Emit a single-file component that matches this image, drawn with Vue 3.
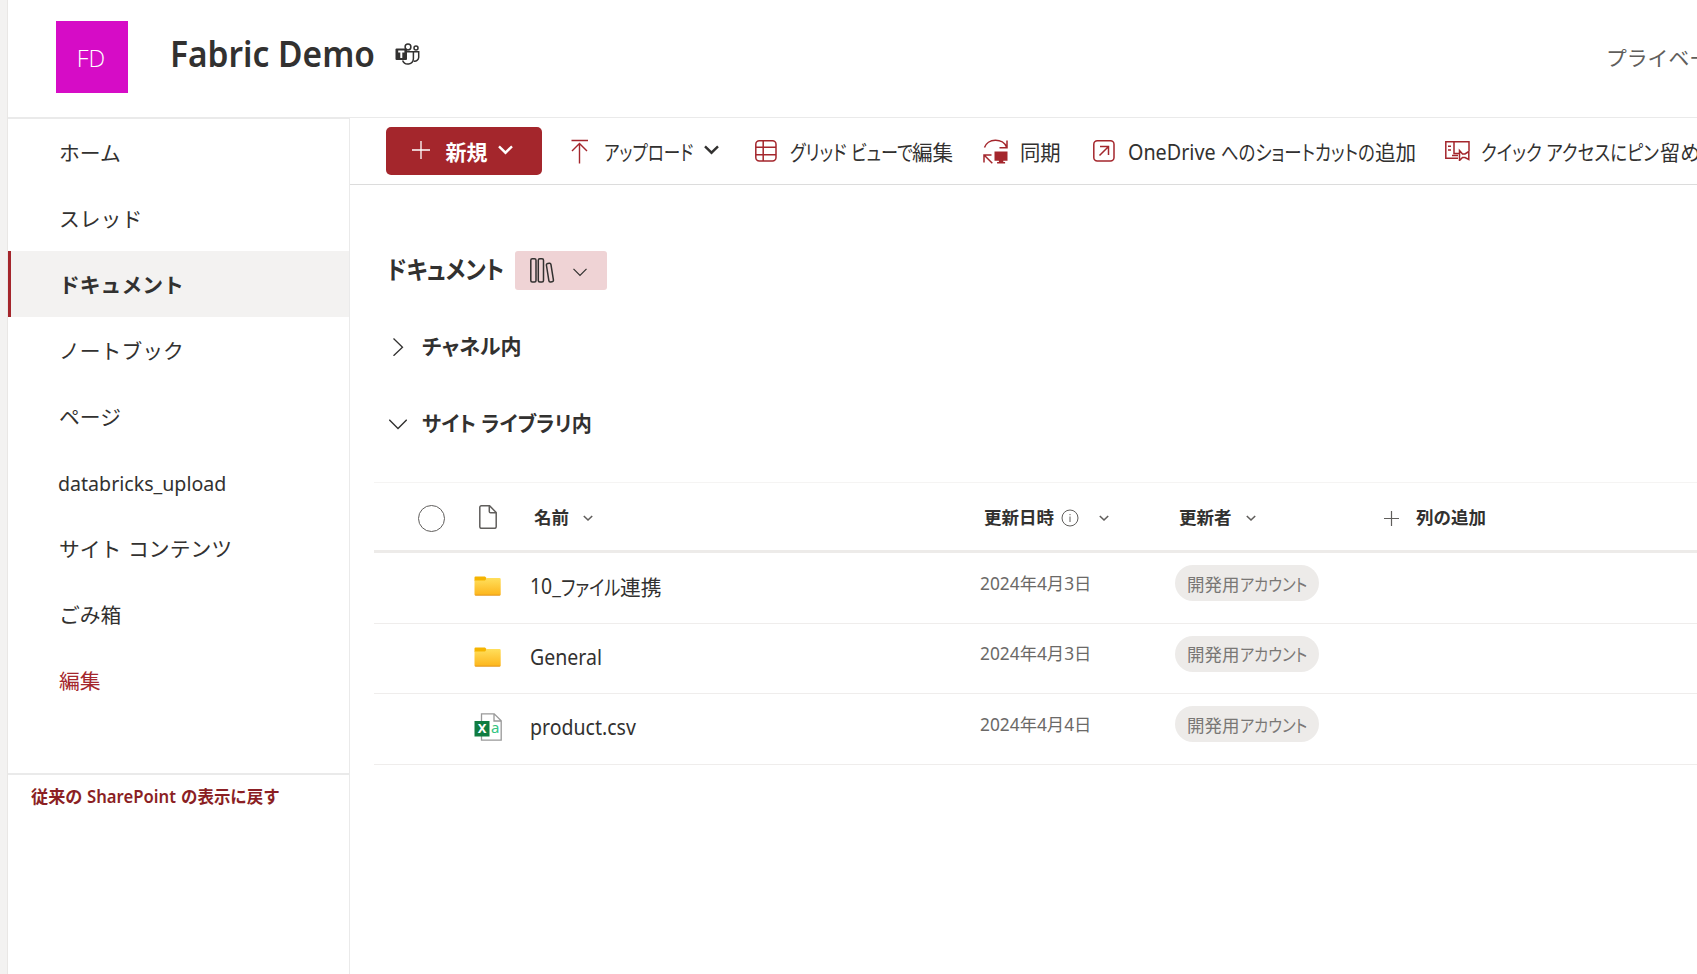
<script setup>
const nav = [
  { label: 'ホーム' },
  { label: 'スレッド' },
  { label: 'ドキュメント', active: true },
  { label: 'ノートブック' },
  { label: 'ページ' },
  { label: 'databricks_upload', latin: true },
  { label: 'サイト コンテンツ' },
  { label: 'ごみ箱' },
  { label: '編集', edit: true },
]
const rows = [
  { kind: 'folder', name: [{ t: '10_', c: 'n-num' }, { t: 'ファイル', c: 'n-kana' }, { t: '連携', c: 'n-kanji' }], date: '2024年4月3日' },
  { kind: 'folder', name: [{ t: 'General', c: 'n-latin' }], date: '2024年4月3日' },
  { kind: 'csv', name: [{ t: 'product.csv', c: 'n-latin' }], date: '2024年4月4日' },
]
</script>

<template>
  <div class="page">
    <div class="strip"></div>
    <div class="site">
      <header class="head">
        <div class="logo">FD</div>
        <h1 class="title t">Fabric Demo</h1>
        <svg class="teams" width="25" height="23" viewBox="0 0 25 23" fill="none" stroke="#323130" stroke-width="1.500">
          <circle cx="13" cy="4" r="2.900" />
          <circle cx="21" cy="5" r="2" />
          <path d="M18.500 8.700h5.200v5.800a4 4 0 0 1-5 3.600" />
          <path d="M12 8.700h6.400v7a5.600 5.600 0 0 1-10.800 1.800" />
          <rect x="0.500" y="5.500" width="11.500" height="11.500" rx="1" fill="#323130" stroke="none" />
          <path d="M3.200 8.400h6.200M6.300 8.400v6.500" stroke="#fff" stroke-width="2" />
        </svg>
        <span class="privacy">プライベート</span>
      </header>
      <div class="body">
        <aside class="side">
          <nav>
            <a v-for="n in nav" :key="n.label" class="item" :class="{ active: n.active, edit: n.edit, latin: n.latin }"><span class="t">{{ n.label }}</span></a>
          </nav>
          <a class="classic"><span class="t c1">従来の</span><span class="t c2">SharePoint</span><span class="t c3">の表示に戻す</span></a>
        </aside>
        <main class="main">
          <div class="bar">
            <button class="new">
              <svg width="18" height="18" viewBox="0 0 18 18" stroke="#fff" stroke-width="1.300"><path d="M9 0v18M0 9h18" /></svg>
              <span class="t">新規</span>
              <svg class="chev" width="15" height="10" viewBox="0 0 15 10" fill="none" stroke="#fff" stroke-width="2.400"><path d="M1 1.300l6.500 6.400L14 1.300" /></svg>
            </button>
            <svg class="i-up" width="18" height="25" viewBox="0 0 18 25" fill="none" stroke="#a4262c" stroke-width="1.400"><path d="M0.500 1.500h16.500M8.500 24.500V4.500M1 12l7.500-7.600 7.500 7.600" /></svg>
            <span class="t cmd b1">アップロード</span>
            <svg class="i-ch" width="15" height="10" viewBox="0 0 15 10" fill="none" stroke="#323130" stroke-width="2.400"><path d="M1 1.300l6.500 6.400L14 1.300" /></svg>
            <svg class="i-grid" width="22" height="22" viewBox="0 0 22 22" fill="none" stroke="#a4262c" stroke-width="1.500"><rect x="0.800" y="0.800" width="20.200" height="20.200" rx="3.500" /><path d="M8.200 1v20M1 7.200h20M1 14.800h20" /></svg>
            <span class="t cmd b2">グリッド ビューで</span><span class="t cmd b2k">編集</span>
            <svg class="i-sync" width="25" height="25" viewBox="0 0 25 25" fill="none" stroke="#a4262c" stroke-width="1.500"><path d="M1.500 8.500A11.500 10 0 0 1 23.500 8M24 1.500v7.300h-7.500M1 23.500v-7.500h7.500M1.300 16.300l8 8" /><path d="M11.500 12.500h13v9.300h-4.200v1.200h1.800v1.500h-8v-1.500h1.800v-1.200h-4.400z" fill="#a4262c" stroke="none" /></svg>
            <span class="t cmd b3">同期</span>
            <svg class="i-short" width="22" height="22" viewBox="0 0 22 22" fill="none" stroke="#a4262c" stroke-width="1.500"><rect x="0.800" y="0.800" width="20.200" height="20.200" rx="3.500" /><path d="M6.500 15.500L15.300 6.700M7 6.500h8.500v8.500" /></svg>
            <span class="t cmd b4">OneDrive</span>
            <span class="t cmd b5">へのショートカットの</span><span class="t cmd b5k">追加</span>
            <svg class="i-pin" width="25" height="20" viewBox="0 0 25 20" fill="none" stroke="#a4262c" stroke-width="1.500"><path d="M13 17.300H0.800V0.800H24v9M9 1v11.500h5M3 5.300h3M3 9h3M7 14.500h6" /><path d="M14.500 9.500l3 3.500h2.500l3.800-2.500v8l-3.800-2h-2.500l-3 3z" /></svg>
            <span class="t cmd b6">クイック アクセスにピン</span><span class="t cmd b6k">留め</span>
          </div>
          <div class="crumb">
            <h2 class="t">ドキュメント</h2>
            <div class="chip">
              <svg width="25" height="25" viewBox="0 0 25 25" fill="none" stroke="#323130" stroke-width="1.500"><rect x="0.800" y="0.800" width="5.200" height="23.200" rx="1.500" /><rect x="8.300" y="0.800" width="5.200" height="23.200" rx="1.500" /><rect x="17.600" y="5.300" width="4.600" height="18.600" rx="1.500" transform="rotate(-9 19.900 14.500)" /></svg>
              <svg class="chip-ch" width="14" height="9" viewBox="0 0 14 9" fill="none" stroke="#323130" stroke-width="1.200"><path d="M0.500 0.800L7 7.500l6.500-6.700" /></svg>
            </div>
          </div>
          <div class="group">
            <svg width="18" height="18" viewBox="0 0 18 18" fill="none" stroke="#323130" stroke-width="1.300"><path d="M4.500 0.500L13.500 9.200l-9 8.600" /></svg>
            <span class="t">チャネル内</span>
          </div>
          <div class="group g2">
            <svg width="18" height="18" viewBox="0 0 18 18" fill="none" stroke="#323130" stroke-width="1.300"><path d="M0.300 4.800L9 13.500l8.700-8.700" /></svg>
            <span class="t">サイト ライブラリ内</span>
          </div>
          <div class="table">
            <div class="row th">
              <div class="c-sel"><i></i></div>
              <div class="c-ico"><svg width="18" height="24" viewBox="0 0 18 24" fill="none" stroke="#605e5c" stroke-width="1.500"><path d="M2.300 0.800h8.300l6.600 6.700v14.300a1.500 1.500 0 0 1-1.500 1.500H2.300A1.500 1.500 0 0 1 0.800 21.800V2.300A1.500 1.500 0 0 1 2.300 0.800zM10.300 1v5.500a1.300 1.300 0 0 0 1.300 1.300H17" /></svg></div>
              <div class="c-name"><span class="t">名前</span><svg class="sc" width="10" height="7" viewBox="0 0 10 7"><path d="M0.800 1l4.200 4 4.200-4" /></svg></div>
              <div class="c-date"><span class="t">更新日時</span>
                <svg class="info" width="18" height="18" viewBox="0 0 18 18" fill="none" stroke="#605e5c"><circle cx="9" cy="9" r="8" /><path d="M9 7.500v5.500M9 5v1.200" /></svg>
                <svg class="sc" width="10" height="7" viewBox="0 0 10 7"><path d="M0.800 1l4.200 4 4.200-4" /></svg></div>
              <div class="c-by"><span class="t">更新者</span><svg class="sc" width="10" height="7" viewBox="0 0 10 7"><path d="M0.800 1l4.200 4 4.200-4" /></svg></div>
              <div class="c-add"><svg width="15" height="15" viewBox="0 0 15 15" stroke="#605e5c" stroke-width="1.200"><path d="M7.500 0v15M0 7.500h15" /></svg><span class="t">列の追加</span></div>
            </div>
            <div v-for="(r, i) in rows" :key="i" class="row td">
              <div class="c-sel"></div>
              <div class="c-ico">
                <svg v-if="r.kind === 'folder'" width="27" height="20" viewBox="0 0 27 20"><defs><linearGradient id="fg" x1="0" y1="0" x2="0" y2="1"><stop offset="0" stop-color="#ffdf5c" /><stop offset="1" stop-color="#fdb51b" /></linearGradient></defs><path d="M0.500 1.500a1 1 0 0 1 1-1h9.500l1.500 1.500v3h-12z" fill="#f5b400" /><path d="M0.500 4.500h10.500l2-2.500h12.500a1.200 1.200 0 0 1 1.200 1.200v15a1.200 1.200 0 0 1-1.200 1.200H1.700a1.200 1.200 0 0 1-1.200-1.200z" fill="url(#fg)" /><path d="M0.700 18.700q.3 .8 1 .8h23.800q.8 0 1-.8z" fill="#d98a1c" /></svg>
                <svg v-else width="28" height="28" viewBox="0 0 28 28"><path d="M7.500 0.800h12.700l7 7v19.400H7.500zM20 1v7h7" fill="#fff" stroke="#999" stroke-width="1.300" /><rect x="0.500" y="8" width="15" height="15.500" fill="#107c41" /><text class="xl" x="8" y="20.300" fill="#fff">X</text><text class="xa" x="21.200" y="20.300" fill="#33c481">a</text></svg>
              </div>
              <div class="c-name"><span v-for="p in r.name" :key="p.t" class="t nm" :class="p.c">{{ p.t }}</span></div>
              <div class="c-date"><span class="t dt">{{ r.date }}</span></div>
              <div class="c-by"><span class="pill"><span class="t">開発用</span><span class="t pk">アカウント</span></span></div>
            </div>
          </div>
        </main>
      </div>
    </div>
  </div>
</template>

<style>
body { background: #fff; overflow: hidden; }
</style>

<style scoped>
* { box-sizing: border-box; }
.page { display: flex; width: 1697px; height: 974px; overflow: hidden; background: #fff; color: #323130; font-family: "Noto Sans", "Noto Sans CJK JP", sans-serif; white-space: nowrap; }
svg { display: block; flex: none; }
.t { flex: none; transform-origin: 0 50%; }
.strip { width: 8px; flex: none; background: #f3f2f1; border-right: 1px solid #e9e7e5; }
.site { flex: 1; min-width: 0; display: flex; flex-direction: column; }
.head { height: 118px; flex: none; display: flex; align-items: flex-start; border-bottom: 1px solid #eaeaea; overflow: hidden; }
.logo { flex: none; width: 72px; height: 72px; margin: 21px 0 0 48px; background: #d60cc6; color: #fff; font: 300 23.500px/75px "Open Sans", sans-serif; text-align: center; padding-right: 2px; }
.title { margin: 29px 0 0 42px; width: 225px; font-size: 36px; line-height: 50px; font-weight: 600; transform: scaleX(.93); }
.teams { margin-top: 43px; }
.privacy { flex: none; margin: 42px 0 0 1186px; font-size: 20.800px; line-height: 32px; color: #605e5c; }
.body { flex: 1; display: flex; min-height: 0; }
.side { width: 342px; flex: none; border-right: 1px solid #eaeaea; border-top: 1px solid #eaeaea; }
nav { height: 656px; border-bottom: 2px solid #eaeaea; }
.item { display: flex; align-items: center; height: 66px; padding-left: 51px; font-size: 20.800px; font-family: "Noto Sans CJK JP", sans-serif; word-spacing: 2px; }
.item.active { background: #f3f2f1; border-left: 3px solid #a4262c; padding-left: 48px; font-weight: 700; }
.item.edit { color: #a4262c; }
.item.latin { font-family: "Noto Sans", sans-serif; padding: 2px 0 0 50px; }
.item.latin .t { transform: scaleX(.942); }
.classic { display: flex; padding: 8px 0 0 23px; font-size: 17.500px; line-height: 26px; font-weight: 600; color: #8b1f24; }
.c1 { width: 56px; transform: scaleX(.98); }
.c2 { width: 94px; transform: scaleX(.953); }
.c3 { transform: scaleX(.94); }
.main { flex: 1; min-width: 0; overflow: hidden; }
.bar { display: flex; align-items: center; height: 67px; padding-left: 36px; border-bottom: 1px solid #dcdcdc; }
.new { display: flex; align-items: center; width: 156px; height: 48px; flex: none; border: 0; border-radius: 5px; background: #a4262c; color: #fff; padding: 0 0 0 26px; font: 700 21px "Noto Sans CJK JP", sans-serif; }
.new .t { margin: 0 10px 0 15px; width: 43px; }
.new svg { margin-bottom: 2px; }
.cmd { font-size: 21px; font-feature-settings: "palt"; }
.i-up { margin-left: 29px; }
.b1 { width: 90px; margin-left: 15px; transform: scaleX(.79); }
.i-ch { margin-left: 10px; margin-bottom: 2px; }
.i-grid { margin-left: 36px; }
.b2 { width: 122px; margin-left: 13px; transform: scaleX(.815); }
.b2k { width: 43px; transform: scaleX(.98); }
.i-sync { margin-left: 28px; }
.b3 { width: 42px; margin-left: 12px; transform: scaleX(.97); }
.i-short { margin-left: 31px; }
.b4 { width: 87px; margin-left: 13px; transform: scaleX(.94); margin-top: 1px; }
.b5 { width: 154px; margin-left: 6px; transform: scaleX(.828); }
.b5k { width: 42px; transform: scaleX(.98); }
.i-pin { margin-left: 28px; }
.b6 { width: 179px; margin-left: 11px; transform: scaleX(.836); }
.b6k { transform: scaleX(.96); }
.crumb { display: flex; align-items: center; margin-top: 66px; padding-left: 37px; height: 39px; }
h2 { margin: -5px 0 0; width: 128px; font-size: 25px; font-weight: 600; font-feature-settings: "palt"; transform: scaleX(.885); }
.chip { display: flex; align-items: center; width: 92px; height: 39px; padding-left: 15px; gap: 18px; background: #efd3d5; border-radius: 3px; }
.chip-ch { margin-top: 3px; }
.group { display: flex; align-items: center; margin-top: 37px; padding-left: 39px; gap: 15px; height: 40px; font-size: 21px; font-weight: 600; font-feature-settings: "palt"; }
.group .t { margin-top: -4px; }
.g2 .t { transform: scaleX(.957); }
.table { margin: 38px 0 0 24px; }
.row { display: flex; }
.th { height: 71px; border-top: 1px solid #f5f4f3; border-bottom: 3px solid #edebe9; align-items: center; font-size: 17.500px; font-weight: 600; }
.th .t { margin-top: -1px; }
.td { height: 70.500px; border-bottom: 1px solid #efedec; align-items: center; }
.row > div { display: flex; align-items: center; flex: none; }
.c-sel { width: 86px; padding-left: 44px; }
.c-sel i { width: 27px; height: 27px; border: 1px solid #605e5c; border-radius: 50%; }
.th svg, .c-sel i { margin-top: 3px; }
.th .c-ico svg { margin-top: 0; }
.c-ico { width: 56px; justify-content: center; padding-right: 1px; }
.td .c-ico { padding-bottom: 3px; }
.c-name { width: 464px; padding-left: 14px; }
.c-date { width: 195px; }
.c-by { width: 209px; }
.sc { fill: none; stroke: #605e5c; stroke-width: 1.600; }
.th .c-name { padding-left: 18px; gap: 14px; }
.th .c-date { padding-left: 4px; }
.info { margin-left: 7px; }
.info + .sc { margin-left: 20px; }
.th .c-by { padding-left: 4px; gap: 14px; }
.c-add { gap: 17px; }
.nm { font-size: 21px; font-feature-settings: "palt"; margin-top: -3px; }
.n-num { width: 31px; transform: scaleX(.925); }
.n-kana { width: 59px; transform: scaleX(.815); }
.n-kanji { transform: scaleX(.99); }
.n-latin { transform: scaleX(.93); }
.dt { font-size: 17.500px; color: #6b6967; margin-top: -11px; transform: scaleX(.99); }
.pill { display: flex; width: 144px; height: 36px; margin-top: -9px; align-items: center; padding-left: 12px; border-radius: 18px; background: #edebe9; color: #797775; font-size: 17.500px; font-feature-settings: "palt"; }
.pk { transform: scaleX(.87); }
.xl { font: 700 13px "Noto Sans", sans-serif; text-anchor: middle; }
.xa { font: 400 15px "Noto Sans", sans-serif; text-anchor: middle; }
</style>
